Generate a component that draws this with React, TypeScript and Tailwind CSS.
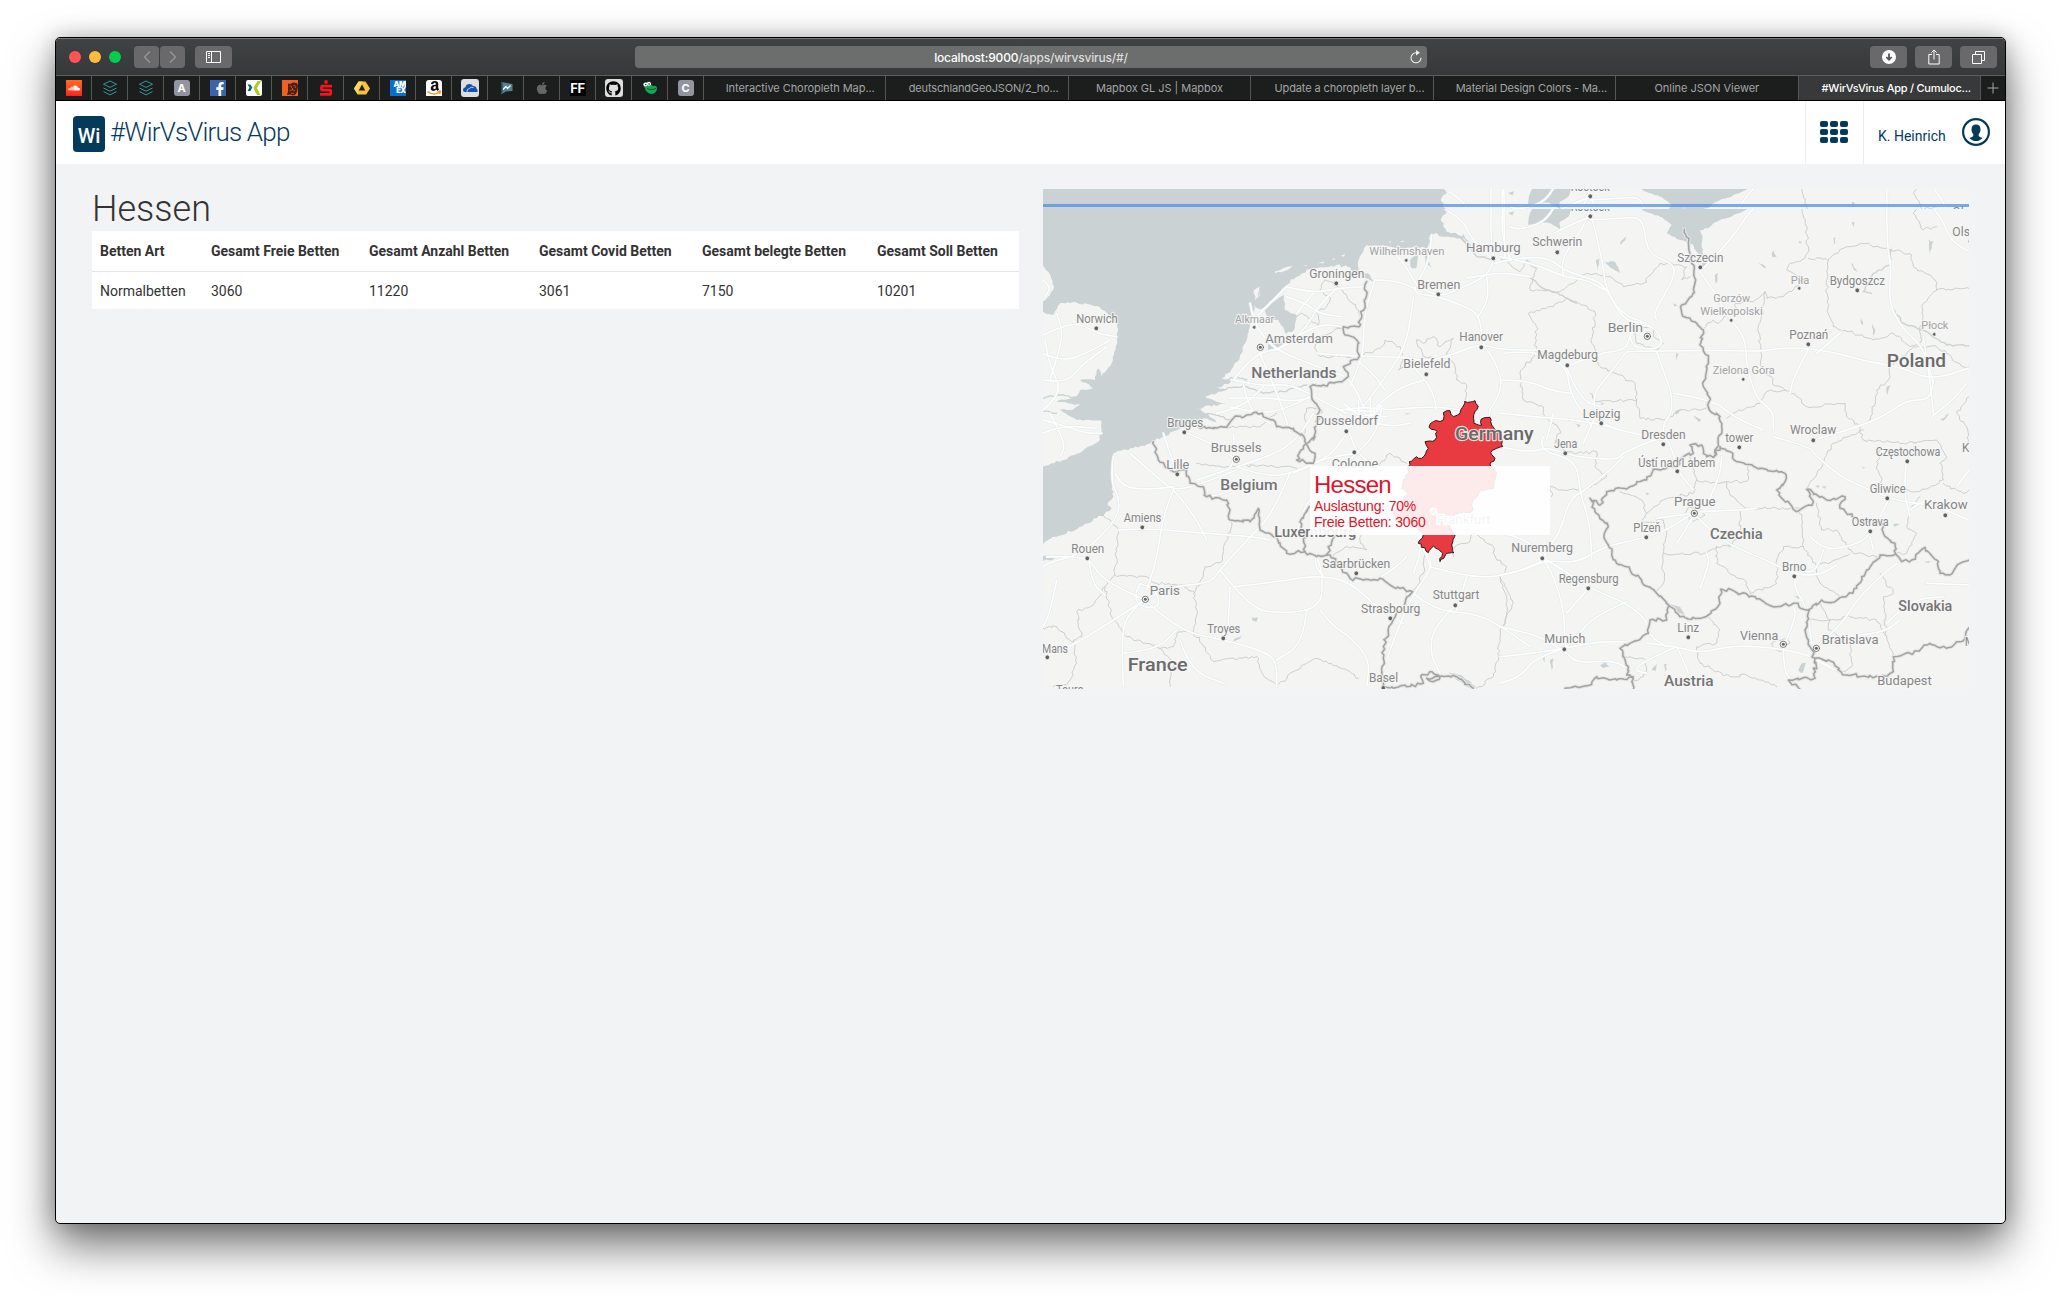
import React from "react";
import { FaSoundcloud, FaAmazon, FaGithub, FaApple, FaFacebookF } from "react-icons/fa";

type Pt = [number, number];

/* Parses "x,y x,y ..." and shifts every point. */
const pts = (s: string, dx = 0, dy = 0): Pt[] =>
  s.trim().split(/\s+/).map((p) => {
    const [x, y] = p.split(",").map(Number);
    return [x + dx, y + dy] as Pt;
  });

/* Subdivides a polyline with a seeded displacement, for coasts and borders. */
function rough(p: Pt[], amp: number, close = false): string {
  let seed = Math.abs(Math.round(p[0][0] * 13 + p[0][1] * 7 + p.length)) + 1;
  const rnd = () => {
    seed = (seed * 16807) % 2147483647;
    return seed / 2147483647 - 0.5;
  };
  const src = close ? [...p, p[0]] : p;
  let d = `M${src[0][0]} ${src[0][1]}`;
  for (let i = 1; i < src.length; i++) {
    const [x0, y0] = src[i - 1];
    const [x1, y1] = src[i];
    const n = Math.max(1, Math.round(Math.hypot(x1 - x0, y1 - y0) / 9));
    for (let k = 1; k < n; k++) {
      const t = k / n;
      d += `L${(x0 + (x1 - x0) * t + rnd() * amp).toFixed(1)} ${(y0 + (y1 - y0) * t + rnd() * amp).toFixed(1)}`;
    }
    d += `L${x1} ${y1}`;
  }
  return close ? d + "Z" : d;
}

/* Smooth line through the points. */
function smooth(p: Pt[]): string {
  let d = `M${p[0][0]} ${p[0][1]}`;
  for (let i = 1; i < p.length - 1; i++) {
    d += `Q${p[i][0]} ${p[i][1]} ${(p[i][0] + p[i + 1][0]) / 2} ${(p[i][1] + p[i + 1][1]) / 2}`;
  }
  const l = p[p.length - 1];
  return d + `L${l[0]} ${l[1]}`;
}

const E = 1410;
const S = 750;

const land: Pt[][] = [
  pts("30,250 55,275 72,320 60,345 30,368"),
  pts("30,388 50,402 70,405 90,370 140,368 200,378 245,410 262,440 262,490 245,550 215,590 205,565 195,600 150,600 190,625 150,630 135,650 80,665 150,675 120,690 90,690 140,720 215,722 215,750 205,785 155,815 100,840 30,860"),
  pts("672,330 690,320 690,345 675,360"),
  pts("735,274 790,257 780,265 735,280"),
  pts("815,256 830,254 828,258"),
  pts("862,248 882,244 880,250"),
  pts("905,238 915,235 913,240"),
  pts("930,226 945,222 942,230"),
  pts("1075,186 1083,184 1083,188"),
  pts("1110,184 1122,182 1118,187"),
];

const water: Pt[][] = [
  pts("30,80 1232,80 1250,100 1232,118 1240,140 1250,155 1275,158 1300,168 1310,195 1290,175 1240,170 1215,160 1200,165 1198,190 1192,240 1204,262 1185,250 1188,205 1150,200 1100,205 1050,198 1010,195 1000,215 986,240 985,275 1020,285 1030,305 1000,285 965,272 960,262 920,255 880,262 840,268 800,290 770,315 740,350 710,378 690,388 672,375 668,400 660,440 650,480 635,520 610,560 575,595 610,605 560,622 585,630 560,640 525,650 560,665 590,670 500,685 525,700 560,725 520,715 480,732 430,754 360,790 300,805 250,820 243,850 245,900 250,950 232,975 245,985 200,1015 150,1040 80,1070 45,1085 30,1110"),
  pts("708,378 762,345 765,390 800,405 792,450 768,462 745,420 715,415 705,395"),
  pts("715,490 740,485 770,490 750,505 715,510"),
  pts("1140,240 1165,225 1158,265 1145,265"),
  pts("770,480 800,465 780,485 775,492"),
  pts("830,430 850,428 820,445"),
  pts("100,80 215,80 205,110 180,125 180,148 145,128 85,135 90,100", E),
  pts("420,80 760,80 640,130 625,145 600,150 608,170 605,200 612,235 590,215 580,195 540,180 500,160 515,135 480,110 430,92", E),
  pts("315,245 345,245 360,280 330,262", E),
  pts("360,190 378,168 376,180 362,194", E),
  pts("288,240 300,236 292,272", E),
  pts("605,250 624,250 615,265", E),
  pts("644,285 655,278 648,312", E),
  pts("775,248 798,262 795,265", E),
  pts("815,222 820,210 830,230 818,232", E),
  pts("895,183 905,185 900,192", E),
  pts("1000,175 1006,172 1004,195", E),
  pts("1055,125 1064,128 1060,142", E),
  pts("1055,248 1072,275 1062,270", E),
  pts("1285,178 1300,185 1290,222", E),
  pts("1168,210 1176,205 1172,255", E),
  pts("1082,408 1090,435 1084,432", E),
  pts("1117,432 1126,450 1120,478", E),
  pts("1160,620 1172,616 1162,645", E),
  pts("1320,720 1348,700 1330,722", E),
  pts("300,664 315,670 305,675", E),
  pts("580,706 605,720 595,726", E),
  pts("525,695 550,682 540,692 528,704", E),
  pts("528,520 536,522 530,540", E),
  pts("520,370 532,376 524,380", E),
  pts("225,730 243,736 235,742", E),
  pts("25,98 42,94 38,106", E),
  pts("505,520 540,530 555,556 530,548", E, S),
  pts("895,722 905,700 918,698 905,730", E, S),
  pts("150,690 162,685 155,720", E, S),
  pts("300,706 318,697 328,710 310,715", E, S),
  pts("128,676 136,676 134,698", E, S),
  pts("455,720 472,700 468,722", E, S),
  pts("493,702 500,702 497,726", E, S),
  pts("945,168 958,166 955,174", E, S),
  pts("965,170 978,168 975,176", E, S),
  pts("1178,284 1200,282 1185,290", E, S),
  pts("1270,395 1292,393 1285,400", E, S),
  pts("675,335 698,340 692,350", E, S),
  pts("885,497 900,502 895,508", E, S),
  pts("1085,108 1098,112 1090,116", E, S),
  pts("436,188 448,190 442,196", E, S),
  pts("665,562 684,562 680,575 668,572", 0, S),
  pts("610,630 635,614 630,626 612,634", 0, S),
  pts("1255,725 1300,740 1340,775 1310,770 1275,745", 0, S),
  pts("30,380 90,375 70,388 40,392", 0, S),
  pts("1122,697 1142,700 1130,704"),
];

const rivers: Pt[][] = [
  pts("1300,165 1340,230 1370,235 1400,250"),
  pts("85,290 130,325 180,345 230,370", E),
  pts("1175,380 1210,430 1270,450 1340,495 1407,497", E),
  pts("1170,255 1120,280 1090,335 1115,340", E),
  pts("560,630 650,620 700,640 760,635 830,615"),
  pts("590,600 620,590 650,600"),
  pts("30,655 90,645 150,655"),
  pts("80,700 30,690"),
  pts("530,700 580,710 600,720"),
  pts("705,296 690,325 685,345"),
];

const countryBorders: Pt[][] = [
  pts("1010,305 1005,370 992,395 988,440 940,440 945,465 980,480 988,530 940,560 955,590 930,605 880,615 840,620 845,650 870,690 862,730 850,780 855,770 820,800 800,840 850,850 855,820 830,795 822,770 790,745 740,740 730,720 680,697 650,705 610,715 590,742 530,745 480,735"),
  pts("370,35 385,90 430,125 470,120 480,160 520,170 530,200 590,210 600,270 660,275 685,235 690,300 730,320 770,370 825,365 860,380 900,375 930,410 960,445 1000,450 1050,445 1080,465 1148,485 1085,580 1060,650 1058,770", 0, S),
  pts("838,230 810,275 825,310 825,365", 0, S),
  pts("925,300 905,335 890,375", 0, S),
  pts("1060,772 1130,770 1180,760 1175,735 1205,725 1230,742 1210,755 1190,745 1280,740 1330,775", 0, S),
  pts("553,148 565,190 575,250 587,300 575,350 545,375 545,398 610,450 600,495 625,540 610,620 630,660 628,690 660,710 665,760 640,832 660,800 690,815 710,845 780,865 855,880 855,905 830,930 890,995 940,965 920,928 980,960 1035,950 1020,985 1075,1020 1140,1025 1155,1070 1185,1090 1187,1122", E),
  pts("640,82 610,70 605,45 570,45 580,70 550,80 530,110 460,118 440,150 390,170 320,185 300,225 270,205 285,245 325,290 312,320 350,400 380,410 470,490 540,560 575,568 625,555 660,520 662,478 700,482 830,530 880,520 925,540 965,510 1005,515 1070,475 1100,420 1140,375 1187,372 1205,395 1235,390 1275,352 1310,390 1320,430 1350,435 1380,400 1410,390", E, S),
  pts("505,530 500,570 450,570 445,610 360,655 385,710 380,735 400,745 400,780", E, S),
  pts("195,775 270,765 290,740 350,750 400,740", E, S),
  pts("928,540 915,600 930,650 945,685 985,690 1040,735 1160,740 1180,725 1180,680 1240,670 1290,640 1340,655 1395,625 1410,590", E, S),
  pts("945,685 945,745 865,750 900,778", E, S),
];

const stateBorders: Pt[][] = [
  pts("885,300 870,330 900,350 890,380 860,400 865,435 935,445"),
  pts("885,300 930,325 985,390 990,420"),
  pts("865,435 815,400 800,410"),
  pts("935,445 870,470 855,500 870,530 980,530 1050,505 1065,480 1110,500 1120,530 1105,570 1140,555"),
  pts("1160,480 1180,490 1210,470 1230,500 1270,475 1250,520 1275,560 1280,600 1310,615 1305,660"),
  pts("1160,480 1180,530 1240,535 1250,520"),
  pts("820,780 830,685 870,685 875,700"),
  pts("590,745 640,740 690,740 740,700"),
  pts("500,100 600,110 700,105 760,110 800,115", 0, S),
  pts("1050,240 1000,260 990,330 1010,360 950,350 905,380", 0, S),
  pts("1045,110 1080,70 1110,85 1130,100", 0, S),
  pts("215,250 265,300 255,430 225,470 245,560 290,620 350,640 390,655 430,650 440,610 490,605 500,540 490,490 520,440 525,410 575,395 580,350 605,290 600,270", 0, S),
  pts("255,435 350,440 380,460 460,465 495,490", 0, S),
  pts("225,470 190,525 140,545 155,620 130,630 140,700 110,765 70,770", 0, S),
  pts("39,595 80,590 110,625 140,640", 0, S),
  pts("490,605 515,640 550,695 680,680 700,735 740,765 830,700 860,685 950,720 985,745", 0, S),
  pts("390,655 430,700 420,770", 0, S),
  pts("1148,485 1185,420 1180,340", 0, S),
  pts("1270,380 1275,350 1310,340 1330,310 1390,350 1400,390 1430,410 1410,440 1430,500 1430,560 1410,600 1405,690 1390,740 1340,775", 0, S),
  pts("1410,440 1450,520 1420,590", 0, S),
  pts("0,230 60,275 80,240 110,265 90,330 180,335 260,280 330,290 370,320 430,310 480,250 560,260 545,300 570,290", E),
  pts("85,400 160,380 200,355 250,375 285,395 275,490 300,560 405,610 410,660 290,665 270,640", E),
  pts("85,400 110,440 105,520 60,580 70,660 130,680 135,710 180,750 165,790", E),
  pts("405,460 420,440 460,445 460,470 490,490 470,510 430,495 410,490 405,460", E),
  pts("410,660 420,715 490,720 540,690 625,685", E),
  pts("612,445 640,420 655,430 710,385 705,370 760,365 795,335 800,355 850,350 885,320 915,300 860,270 870,250 915,235 925,200 915,130 900,27", E),
  pts("925,235 985,240 1030,205 1085,190 1160,205 1235,225 1240,260 1305,300 1310,330 1407,325", E),
  pts("985,240 980,300 985,400 1000,440 1120,480 1180,460 1230,500 1260,490 1270,370 1310,330", E),
  pts("795,335 790,400 775,440 785,580 815,590 820,615 855,630 800,635 780,670 700,700 680,715", E),
  pts("855,630 890,650 920,680 1035,670 1040,710 1080,740 1110,720 1130,630 1165,600 1170,560 1240,500 1310,500 1390,560 1407,560", E),
  pts("1407,650 1370,700 1400,740 1407,790", E),
  pts("1090,750 1000,790 970,850 920,930", E),
  pts("1080,740 1090,780 1210,790 1310,780 1340,830 1320,850 1330,900 1260,935 1150,925 1130,860 1140,800", E),
  pts("1245,30 1270,60 1240,100 1270,150 1310,140", E),
  pts("1260,200 1230,240 1220,290 1250,310 1220,370 1190,370", E, S),
  pts("1330,160 1390,190 1407,180", E, S),
  pts("240,180 180,180 150,170 155,200", E, S),
  pts("165,30 190,60 230,70 290,65 285,110 320,140 250,180", E, S),
  pts("570,80 590,150 650,160 680,155 740,155 745,105", E, S),
  pts("680,155 690,195 740,235 830,235 900,235", E, S),
  pts("590,150 580,190 500,205 440,250 425,210 360,185", E, S),
  pts("440,250 425,280 490,270 500,310 490,370 620,370 650,350 690,350 720,300 720,240", E, S),
  pts("490,370 490,460 465,490", E, S),
  pts("650,350 650,400 740,460 750,490 830,460 830,390 850,350 910,350 900,240", E, S),
  pts("910,350 950,410 960,460 1020,500", E, S),
  pts("950,220 965,300 1010,300 1060,370 1130,380 1120,400", E, S),
  pts("950,410 1050,370", E, S),
  pts("960,520 990,570 1050,560 1130,570 1160,620 1150,500 1180,490 1140,430", E, S),
  pts("1160,620 1180,680", E, S),
  pts("990,570 985,600 1050,640 1055,710 1030,725", E, S),
  pts("930,570 990,570", E, S),
  pts("625,560 660,600 650,640 590,650 600,700 690,740 740,735 780,750 830,770", E, S),
  pts("375,680 430,685 440,730 400,760", E, S),
  pts("815,640 830,630 860,625 870,640 840,665 820,655 815,640", E, S),
  pts("555,250 570,230 600,235 615,255 600,265 580,275 555,250", E, S),
];

const roads: Pt[][] = [
  pts("39,465 90,440 150,430 200,460 260,470"),
  pts("80,400 100,450 85,520 60,600"),
  pts("39,520 100,545 170,520 240,480"),
  pts("39,600 110,610 150,560 230,500"),
  pts("39,690 100,640 60,560 45,480"),
  pts("39,720 110,740 170,760 215,760"),
  pts("60,700 110,790 90,830"),
  pts("39,760 90,735 200,745"),
  pts("39,300 65,320 45,350"),
  pts("1385,30 1380,180 1395,235 1370,290 1280,330 1230,350 1160,320 1130,260 1090,215"),
  pts("1255,95 1300,120 1320,170 1385,235"),
  pts("1420,60 1410,150 1440,235"),
  pts("1395,250 1480,230 1560,235 1600,270 1660,290 1720,310 1770,400 1850,430"),
  pts("1310,295 1400,275 1500,290"),
  pts("1205,165 1200,240 1160,310 1150,340 1225,350 1280,370 1350,400 1355,490 1395,540 1420,620 1380,690"),
  pts("1370,290 1380,350 1345,410"),
  pts("1035,300 1090,300 1155,325"),
  pts("1035,300 1010,370 1000,450 1000,520 960,620"),
  pts("1150,350 1140,440 1115,520 1060,600 1000,680"),
  pts("860,520 980,530 1120,530 1200,545 1290,515 1355,490 1410,510 1560,510"),
  pts("1120,530 1180,590 1210,640 1220,690"),
  pts("1030,690 1090,630 1180,600"),
  pts("980,540 1030,580 1065,630"),
  pts("660,370 670,420 700,470 740,510 860,560 960,590 1000,680"),
  pts("770,320 730,360 680,410"),
  pts("770,320 850,340 920,325 1000,320"),
  pts("800,400 850,340"), pts("920,325 870,370 830,440 770,500 690,520"),
  pts("740,510 850,430 940,440"), pts("770,350 830,370 865,400 935,410"),
  pts("610,600 700,620 780,610 870,660 950,700"),
  pts("610,600 650,550 690,520"), pts("600,680 680,700 760,690 860,640"),
  pts("690,520 720,590 760,690 780,760"), pts("560,700 640,680 700,620"),
  pts("600,655 690,650 790,665 850,650"), pts("640,610 655,690 720,730"),
  pts("610,760 620,860 560,880 500,900"),
  pts("620,860 700,890 790,880 900,830 950,760"),
  pts("620,860 720,830 800,780 850,700"),
  pts("463,757 550,790 620,840"), pts("440,880 400,760"),
  pts("930,690 1000,680 1060,690 1130,685 1220,680 1290,690"),
  pts("930,700 960,760 980,820 1060,880 1130,950 1170,1050"),
  pts("960,740 1030,710 1060,660 1040,760 980,820"),
  pts("920,730 1000,700 1070,710"), pts("940,670 1000,720 1080,740 1140,730"),
  pts("985,660 990,735"), pts("1020,655 1025,740"), pts("950,690 1055,695"),
  pts("1380,690 1370,760"), pts("980,820 920,880 830,960 800,1060"),
  pts("980,820 890,830 790,880"),
  pts("250,830 240,900 270,960 260,1020 160,1120 50,1150 30,1170"),
  pts("300,820 390,900 430,930 490,920 620,870"),
  pts("430,930 400,1000 380,1140 350,1230"),
  pts("430,930 490,1000 530,1080"), pts("265,1050 350,1045 520,1060 670,1070 720,1080"),
  pts("430,920 350,930 280,920 255,880"), pts("530,950 600,940 640,900"),
  pts("345,1260 280,1230 210,1190 175,1130 50,1130"), pts("345,1260 410,1220 540,1210 570,1170 660,1070 720,1010 780,880"),
  pts("345,1260 440,1350 580,1380 690,1410 740,1440 740,1520"),
  pts("345,1260 290,1300 275,1380 280,1520"), pts("345,1260 250,1320 140,1390 50,1430"),
  pts("570,1170 610,1220 670,1280 720,1300 870,1290 880,1190 860,1130"),
  pts("600,1220 595,1360 580,1380"), pts("610,1220 750,1205 860,1185 960,1205 1050,1290 1120,1330"),
  pts("870,1290 910,1340 960,1370 1020,1440 1010,1520"), pts("830,1290 820,1390 740,1440"),
  pts("175,1130 185,1210 225,1245"), pts("80,1200 60,1300 39,1340"),
  pts("280,1420 380,1410 440,1350"), pts("450,1380 480,1470 580,1510"),
  pts("330,1210 300,1270 390,1290 380,1230 330,1210"),
  pts("1150,1080 1190,1120 1210,1160 1150,1240 1090,1380 1050,1500"),
  pts("1170,1050 1175,1110 1150,1180"), pts("1200,1160 1310,1190 1410,1190 1500,1160 1540,1140"),
  pts("1130,1130 1060,1200 960,1205"), pts("1150,1240 1210,1290 1330,1300 1400,1330 1500,1400"),
  pts("1276,1276 1210,1340 1200,1420 1230,1480"), pts("1310,1190 1280,1290"),
  pts("1190,1010 1230,1000 1300,960"), pts("1200,1160 1180,1090 1130,1020"),
  pts("860,1120 850,1150 880,1190"), pts("1060,880 1000,920 920,930"),
  pts("10,520 100,510 200,555 210,640 250,700 275,740", E),
  pts("0,600 80,600 150,630 210,640", E),
  pts("275,30 275,110 185,230 190,290", E), pts("275,110 310,250 315,320 370,420 430,430", E),
  pts("270,120 360,115 430,110 440,220 520,250 525,290 460,400 470,420", E),
  pts("200,70 270,50 360,55 430,50 470,70", E), pts("160,160 230,125 275,110", E),
  pts("0,230 100,250 190,290 260,300 315,330", E),
  pts("200,560 290,520 380,510 390,460 430,430 470,450 490,490 460,510 400,500 390,470", E),
  pts("380,515 640,510 780,515 870,500 1000,515 1100,545 1200,560 1290,600 1407,565", E),
  pts("380,515 330,580 280,640 285,700 320,740 400,760 500,780", E),
  pts("470,515 500,600 515,640 515,700 490,730 490,780", E),
  pts("520,640 640,660 700,710 790,750", E), pts("600,275 640,330 690,420 735,470 740,560 770,660 820,690 820,750", E),
  pts("600,275 660,215 720,140 760,80 830,50", E), pts("1160,30 1160,200 1175,260 1165,370 1210,450 1270,500 1300,610", E),
  pts("930,500 880,590 870,640", E), pts("950,520 1025,455", E), pts("1270,470 1290,600 1300,700", E),
  pts("940,780 1080,740 1165,700 1220,660 1290,660 1300,600", E),
  pts("1295,710 1350,670 1400,610", E), pts("1250,30 1320,100 1350,180 1407,215", E),
  pts("200,565 240,660 300,680", E), pts("0,700 100,710 230,720 330,740", E), pts("140,780 160,700", E),
  pts("250,790 290,700", E), pts("170,60 150,120 60,150 30,140", E), pts("10,30 15,230", E),
  pts("0,50 90,70 140,50 220,80 350,90 370,70", E, S), pts("370,70 430,40 500,20 520,70 530,120 580,180", E, S),
  pts("240,190 320,130 370,80", E, S), pts("130,20 110,60 230,90 240,190 270,280 275,390", E, S),
  pts("240,190 210,200 180,310 130,370 140,390", E, S),
  pts("0,435 60,425 140,390 230,400 310,350 430,325 500,300 580,250", E, S),
  pts("0,310 70,320 140,390 190,520 195,640 200,660", E, S),
  pts("140,390 190,420 280,480 380,520 440,570 450,620 500,650", E, S),
  pts("380,515 280,560 230,620 195,655", E, S), pts("0,680 100,670 195,655 290,635 380,635", E, S),
  pts("0,590 100,610 190,660 230,700 340,690 390,720", E, S),
  pts("195,655 110,680 60,740 0,760", E, S), pts("265,475 200,550", E, S),
  pts("440,640 530,650 600,670 700,645 840,655 940,680 990,710", E, S),
  pts("530,650 555,700 580,775", E, S), pts("530,650 440,690 400,720 440,730", E, S),
  pts("580,250 640,310 700,350 800,390 885,435 960,435 1010,405", E, S),
  pts("600,245 720,240 770,235", E, S), pts("580,250 470,265", E, S), pts("530,340 580,260", E, S),
  pts("885,435 880,470 920,530 935,640", E, S), pts("600,475 630,400 620,370", E, S),
  pts("620,225 660,140 665,80", E, S), pts("930,320 970,360 1050,350 1110,320 1160,220 1170,200", E, S),
  pts("970,360 950,430 900,420", E, S), pts("820,20 930,50 940,70 1020,140 1110,180 1200,215 1300,225 1407,270", E, S),
  pts("1220,80 1210,180 1230,260", E, S), pts("1230,240 1280,200 1330,230", E, S),
  pts("950,650 1020,590 1070,510 1140,440 1190,400", E, S), pts("1160,580 1230,510 1330,500", E, S),
  pts("850,650 850,720 880,760", E, S), pts("850,650 890,560 880,530", E, S),
  pts("950,690 1030,740 1170,750 1300,740", E, S), pts("1280,460 1407,465", E, S),
  pts("1110,320 1120,360", E, S), pts("1370,170 1407,120", E, S), pts("1040,620 1150,610 1200,570", E, S),
];

type Kind = "town" | "city" | "country" | "big";
type Label = [string, number, number, number, Kind, number?, number?, boolean?];

/* text, x, baseline, width, kind, marker x, marker y, capital */
const labels: Label[] = [
  ["Wilhelmshaven", 1018, 225, 225, "town", 1129, 241],
  ["Groningen", 838, 293, 165, "city", 919, 310],
  ["Hamburg", 1308, 216, 164, "city", 1390, 235],
  ["Bremen", 1162, 326, 129, "city", 1225, 343],
  ["Norwich", 139, 429, 124, "city", 199, 445],
  ["Alkmaar", 615, 430, 117, "town", 673, 442],
  ["Amsterdam", 706, 488, 203, "city", 691, 502, true],
  ["Netherlands", 664, 594, 256, "country"],
  ["Hanover", 1288, 484, 131, "city", 1354, 502],
  ["Bielefeld", 1120, 565, 141, "city", 1189, 583],
  ["Bruges", 412, 742, 108, "city", 463, 757],
  ["Dusseldorf", 857, 735, 187, "city", 949, 754],
  ["Germany", 1275, 780, 236, "big"],
  ["Schwerin", 97 + E, 199, 150, "city", 172 + E, 217],
  ["Rostock", 212 + E, 94, 117, "city", 271 + E, 109],
  ["Szczecin", 532 + E, 245, 138, "city", 601 + E, 262],
  ["Piła", 872 + E, 311, 56, "town", 898 + E, 325],
  ["Bydgoszcz", 989 + E, 314, 166, "city", 1072 + E, 331],
  ["Olsztyn", 1357 + E, 167, 120, "city", 1412 + E, 184],
  ["Gorzów", 640 + E, 367, 110, "town"],
  ["Wielkopolski", 601 + E, 405, 187, "town", 694 + E, 421],
  ["Berlin", 323 + E, 457, 106, "city", 442 + E, 469, true],
  ["Magdeburg", 112 + E, 538, 182, "city", 202 + E, 556],
  ["Poznań", 868 + E, 477, 117, "city", 925 + E, 493],
  ["Płock", 1264 + E, 447, 81, "town", 1303 + E, 463],
  ["Poland", 1160 + E, 562, 178, "big"],
  ["Zielona Góra", 638 + E, 582, 186, "town", 730 + E, 598],
  ["Leipzig", 248 + E, 713, 113, "city", 304 + E, 730],
  ["Dresden", 424 + E, 777, 133, "city", 490 + E, 793],
  ["Wroclaw", 870 + E, 763, 139, "city", 940 + E, 781],
  ["Brussels", 542, 66 + S, 153, "city", 619, 88 + S, true],
  ["Lille", 409, 117 + S, 69, "city", 442, 133 + S],
  ["Cologne", 905, 113 + S, 140, "city", 973, 67 + S],
  ["Belgium", 571, 179 + S, 172, "country"],
  ["Amiens", 281, 276 + S, 113, "city", 337, 292 + S],
  ["Rouen", 124, 370 + S, 99, "city", 172, 385 + S],
  ["Luxembourg", 733, 321 + S, 246, "country"],
  ["Saarbrücken", 877, 414 + S, 204, "city", 979, 430 + S],
  ["Paris", 359, 496 + S, 91, "city", 346, 508 + S, true],
  ["Stuttgart", 1208, 508 + S, 140, "city", 1276, 526 + S],
  ["Strasbourg", 993, 549 + S, 178, "city", 1081, 565 + S],
  ["Troyes", 532, 609 + S, 99, "city", 580, 625 + S],
  ["Mans", 36, 668 + S, 78, "city", 52, 682 + S],
  ["France", 293, 724 + S, 180, "big"],
  ["Basel", 1017, 757 + S, 87, "city", 1060, 774 + S],
  ["Tours", 78, 793 + S, 82, "city"],
  ["Jena", 162 + E, 54 + S, 70, "city", 196 + E, 70 + S],
  ["tower", 676 + E, 36 + S, 84, "city", 718 + E, 52 + S],
  ["Ústí nad Labem", 415 + E, 110 + S, 231, "city", 532 + E, 124 + S],
  ["Częstochowa", 1127 + E, 79 + S, 194, "city", 1222 + E, 94 + S],
  ["Kielce", 1386 + E, 65 + S, 95, "city"],
  ["Prague", 522 + E, 229 + S, 125, "city", 583 + E, 250 + S, true],
  ["Gliwice", 1109 + E, 190 + S, 108, "city", 1162 + E, 205 + S],
  ["Krakow", 1272 + E, 236 + S, 131, "city", 1336 + E, 256 + S],
  ["Plzeň", 400 + E, 306 + S, 82, "city", 439 + E, 322 + S],
  ["Czechia", 630 + E, 327 + S, 158, "country"],
  ["Ostrava", 1055 + E, 288 + S, 111, "city", 1111 + E, 304 + S],
  ["Nuremberg", 34 + E, 367 + S, 185, "city", 127 + E, 385 + S],
  ["Brno", 846 + E, 423 + S, 73, "city", 883 + E, 439 + S],
  ["Regensburg", 176 + E, 459 + S, 180, "city", 265 + E, 475 + S],
  ["Slovakia", 1195 + E, 544 + S, 162, "country"],
  ["Linz", 532 + E, 606 + S, 66, "city", 565 + E, 622 + S],
  ["Munich", 133 + E, 639 + S, 123, "city", 193 + E, 658 + S],
  ["Vienna", 720 + E, 630 + S, 115, "city", 850 + E, 643 + S, true],
  ["Bratislava", 965 + E, 642 + S, 171, "city", 949 + E, 655 + S, true],
  ["Austria", 492 + E, 768 + S, 149, "country"],
  ["Budapest", 1132 + E, 766 + S, 163, "city"],
  ["Miskolc", 1394 + E, 647 + S, 120, "city"],
];

const hessen = pts(
  "495,65 525,62 535,78 525,95 522,130 545,135 543,118 570,112 575,135 600,160 608,200 590,205 572,218 585,235 570,255 590,280 580,325 545,330 520,360 515,395 465,400 445,430 455,450 465,465 455,495 462,518 440,520 420,545 428,520 400,498 385,518 355,490 370,465 340,430 285,420 280,400 325,340 305,325 325,270 328,245 350,230 365,235 385,205 375,185 405,180 412,155 387,142 400,125 430,120 430,98 450,92 460,110 480,100",
  810,
  600
);

const fontSize: Record<Kind, number> = { town: 35, city: 38, country: 45, big: 56 };
const fontFill: Record<Kind, string> = { town: "#a3a3a3", city: "#868686", country: "#747474", big: "#6a6a6a" };

function MapDrawing() {
  return (
    <svg className="block h-full w-full" viewBox="39 27 2778 1500" fontFamily="Roboto, 'Open Sans', sans-serif">
      <defs>
        <clipPath id="strip"><rect x="39" y="87" width="2778" height="60" /></clipPath>
        <clipPath id="main"><rect x="39" y="87" width="2778" height="1440" /></clipPath>
      </defs>
      <rect x="39" y="27" width="2778" height="1500" fill="#f4f4f3" />
      <g id="tiles" clipPath="url(#main)" strokeLinejoin="round" strokeLinecap="round">
        {water.map((p, i) => <path key={i} d={rough(p, i ? 5 : 8, true)} fill="#cad2d3" />)}
        {land.map((p, i) => <path key={i} d={rough(p, 6, true)} fill="#f4f4f3" />)}
        {rivers.map((p, i) => <path key={i} d={rough(p, 6)} fill="none" stroke="#cad2d3" strokeWidth="4" />)}
        {stateBorders.map((p, i) => <path key={i} d={rough(p, 9)} fill="none" stroke="#cbcbcb" strokeWidth="2.8" />)}
        {roads.map((p, i) => <path key={i} d={smooth(p)} fill="none" stroke="#e6ecec" strokeWidth="8.5" />)}
        {roads.map((p, i) => <path key={i} d={smooth(p)} fill="none" stroke="#ffffff" strokeWidth="4.5" />)}
        {countryBorders.map((p, i) => <path key={i} d={rough(p, 11)} fill="none" stroke="#e6e6e6" strokeWidth="11" />)}
        {countryBorders.map((p, i) => <path key={i} d={rough(p, 11)} fill="none" stroke="#a3a3a3" strokeWidth="4.6" />)}
        <path d={rough(hessen, 7, true)} fill="#e73b41" stroke="#3a1517" strokeWidth="3" />
        <circle cx="1210" cy="994" r="9" fill="#999" stroke="#ffffff" strokeWidth="5" />
        <text x="1220" y="1032" fontSize="37" fill="#909090" stroke="#ffffff" strokeWidth="8" paintOrder="stroke" textLength="162" lengthAdjust="spacingAndGlyphs">Frankfurt</text>
        {labels.map(([t, x, y, w, kind, mx, my, capital]) => (
          <g key={t}>
            <text
              x={x} y={y} textLength={w} lengthAdjust="spacingAndGlyphs"
              fontSize={fontSize[kind]} fontWeight={kind === "country" || kind === "big" ? 500 : 400}
              fill={fontFill[kind]} stroke="#f7f7f7" strokeOpacity="0.85" strokeWidth="7" paintOrder="stroke"
            >
              {t}
            </text>
            {mx !== undefined && my !== undefined && (capital ? (
              <g>
                <circle cx={mx} cy={my} r="9.5" fill="#f7f7f7" stroke="#666" strokeWidth="2.5" />
                <circle cx={mx} cy={my} r="4.5" fill="#666" />
              </g>
            ) : (
              <circle cx={mx} cy={my} r={kind === "town" ? 5.5 : 7} fill="#606060" stroke="#f7f7f7" strokeWidth="2" />
            ))}
          </g>
        ))}
      </g>
      <g transform="translate(0 -60)">
        <use href="#tiles" clipPath="url(#strip)" />
      </g>
      <rect x="39" y="72" width="2778" height="9" fill="#4a90e9" fillOpacity="0.74" />
    </svg>
  );
}

const Layers = () => (
  <svg className="h-4 w-4" viewBox="0 0 16 16" fill="none" stroke="#3a96a3" strokeWidth="1">
    <path d="M8 1 14.5 4.2 8 7.400 1.500 4.200ZM1.500 8 8 11.200 14.500 8M1.500 11.600 8 14.900 14.500 11.600" />
  </svg>
);

const Letter = ({ c }: { c: string }) => (
  <span className="flex h-4 w-4 items-center justify-center rounded-[3px] bg-[#9294a0] text-[11px] font-bold leading-none text-white">{c}</span>
);

const pinned: React.ReactNode[] = [
  <span className="flex h-4 w-4 items-center justify-center bg-linear-to-b from-[#ff6a22] to-[#fb1f1f]"><FaSoundcloud className="h-3 w-3 text-white" /></span>,
  <Layers />,
  <Layers />,
  <Letter c="A" />,
  <span className="flex h-4 w-4 items-end justify-end bg-[#3c64ad]"><FaFacebookF className="h-[14px] w-3 text-white" /></span>,
  <svg className="h-4 w-4" viewBox="0 0 16 16">
    <rect width="16" height="16" rx="2" fill="#fff" />
    <path d="M11.500 1H15L11 8 14.500 15H11L7.300 8Z" fill="#b0c829" />
    <path d="M1.500 4.500h2.900L6.300 7.400 4.400 11H1.500L3.500 7.400Z" fill="#0a6464" />
  </svg>,
  <svg className="h-4 w-4" viewBox="0 0 16 16">
    <rect width="16" height="16" fill="#ee6023" />
    <path d="M6 3.500 8 4l3-1.500 4 .5 1 3-1 6-2 3-2.500.5-2-1L5 15l1-3.500Z" fill="#4a1f12" />
    <path d="M7.500 6.500c1.500-1.500 2.500 0 2 1.500M11.500 5.500c1.500-.5 2.500.5 1.500 2.500M7.500 11c1.500-1.500 4-1.500 5.500 0M9 13.300h3M10.500 8v2" fill="none" stroke="#ee6023" strokeWidth=".8" />
  </svg>,
  <svg className="h-4 w-4" viewBox="0 0 16 16" fill="none" stroke="#f5151f">
    <circle cx="8" cy="1.900" r="1.900" fill="#f5151f" stroke="none" />
    <path d="M14 6.200H4.200Q3.500 6.200 3.500 6.900V9.500Q3.500 10.200 4.200 10.200H12Q12.700 10.200 12.700 10.900V13.500Q12.700 14.300 12 14.300H2" strokeWidth="2.800" />
  </svg>,
  <svg className="h-4 w-4" viewBox="0 0 16 16">
    <path d="M4.500 1.500h7L16 8.500 12.200 14.500H3.800L0 8.500Z" fill="#fbc13c" />
    <path d="M4.500 1.500h4L4 9.500 3.800 14.500 0 8.500Z" fill="#ffd965" />
    <path d="M8 4.500 11.200 10.500H4.800Z" fill="#1d1d1d" />
  </svg>,
  <span className="flex h-4 w-4 flex-col items-end justify-center overflow-hidden bg-[#0a6fce] text-[7.5px] font-black leading-[6.5px] tracking-[-0.6px] text-white"><span>AM</span><span>EX</span></span>,
  <span className="flex h-4 w-4 items-center justify-center rounded-[3px] bg-white">
    <svg className="h-4 w-4" viewBox="0 0 16 16">
      <svg x="1" y="0" width="14" height="15.5" viewBox="0 0 448 512"><FaAmazon x="0" y="0" size={500} color="#111" /></svg>
      <path d="M0 11.300H16V16H0Z" fill="#fff" />
      <path d="M1.300 11.700Q7.500 15.800 12.800 12.700M11.500 11.700 14.300 11.500 13.700 14.200" fill="none" stroke="#f79a1e" strokeWidth="1.400" />
    </svg>
  </span>,
  <span className="flex h-[18px] w-[18px] items-center justify-center rounded-[3px] bg-[#dedfe1]">
    <svg className="h-4 w-4" viewBox="0 0 16 16"><path d="M1 10Q1 7.500 3.500 7.300 4 4 7.500 4 10 4 11 6 14.500 6.200 14.500 8.500 16 9.300 15.500 12H3Q1 12 1 10Z" fill="#1253ad" /><path d="M5 12Q4.500 9 7.300 8.500 9 6.500 11.500 7.500" fill="none" stroke="#dedfe1" strokeWidth=".9" /></svg>
  </span>,
  <svg className="h-4 w-4" viewBox="0 0 16 16"><path d="M3 2 14.500 4V11L8 11.500 3 14.500Z" fill="#54808f" /><path d="M5 9.500 8 6.500 9.500 8.500 12.500 5.500" fill="none" stroke="#fff" strokeWidth="1.200" /><path d="M3 2V14.500L4.500 12V3Z" fill="#2a4550" /></svg>,
  <FaApple className="h-[14px] w-[14px] text-[#666]" />,
  <span className="flex h-4 w-4 items-center justify-center bg-black text-[13px] font-bold leading-none tracking-[-0.5px] text-white">FF</span>,
  <span className="flex h-[18px] w-[18px] items-center justify-center rounded-[3px] bg-[#dedede]"><FaGithub className="h-[15px] w-[15px] text-black" /></span>,
  <svg className="h-4 w-4" viewBox="0 0 16 16"><path d="M1 5Q1 2 4 2.500 6 1 8 3 9 5 11 6 15 5 15 9 14 14 9 14 3 12 3 8Z" fill="#18a551" /><path d="M5 8Q8 11 14 8.500" fill="none" stroke="#0a5a2c" /><circle cx="3.500" cy="4.500" r="2" fill="#fff" /><circle cx="7" cy="3.800" r="2" fill="#fff" /><circle cx="3.800" cy="4.600" r=".7" /><circle cx="7.100" cy="4" r=".7" /></svg>,
  <Letter c="C" />,
];

const tabs = [
  { title: "Interactive Choropleth Map...", inner: "pl-[11px] tracking-[-0.06px]" },
  { title: "deutschlandGeoJSON/2_ho...", inner: "pl-[13px] tracking-[-0.15px]" },
  { title: "Mapbox GL JS | Mapbox", inner: "tracking-[-0.03px]" },
  { title: "Update a choropleth layer b...", inner: "pl-[15px] tracking-[-0.12px]" },
  { title: "Material Design Colors - Ma...", inner: "pl-[14px] tracking-[-0.12px]" },
  { title: "Online JSON Viewer", inner: "tracking-[-0.03px]" },
];

const columns = [
  { head: "Betten Art", value: "Normalbetten", w: "w-[111px]" },
  { head: "Gesamt Freie Betten", value: "3060", w: "w-[158px]" },
  { head: "Gesamt Anzahl Betten", value: "11220", w: "w-[170px]" },
  { head: "Gesamt Covid Betten", value: "3061", w: "w-[163px]" },
  { head: "Gesamt belegte Betten", value: "7150", w: "w-[175px]" },
  { head: "Gesamt Soll Betten", value: "10201", w: "w-[150px]" },
];

const toolButton = "flex h-[22px] items-center justify-center rounded bg-[#69696b]";

function Toolbar() {
  return (
    <div className="flex h-[38px] items-center border-b border-[#5c5d5d] border-t border-t-[#777878] bg-linear-to-b from-[#414243] to-[#373839] pl-[13px] pr-2">
      <div className="flex gap-2">
        <span className="h-3 w-3 rounded-full bg-[#ff5452]" />
        <span className="h-3 w-3 rounded-full bg-[#fdbc40]" />
        <span className="h-3 w-3 rounded-full bg-[#04cd4d]" />
      </div>
      <div className="ml-[13px] flex gap-px">
        <span className={`${toolButton} w-[25px]`}>
          <svg className="h-3 w-2" viewBox="0 0 8 12" fill="none" stroke="#97979a" strokeWidth="1.300"><path d="M7 .5 1.500 6 7 11.500" /></svg>
        </span>
        <span className={`${toolButton} w-[25px]`}>
          <svg className="h-3 w-2" viewBox="0 0 8 12" fill="none" stroke="#97979a" strokeWidth="1.300"><path d="M1 .5 6.500 6 1 11.500" /></svg>
        </span>
      </div>
      <span className={`${toolButton} ml-[10px] w-[37px]`}>
        <svg className="h-3 w-[15px]" viewBox="0 0 15 12" fill="none" stroke="#fff"><path d="M.5.5h14v11H.5ZM5.500.5v11M2 2.500h2M2 4.500h2M2 6.500h2" /></svg>
      </span>
      <div className="ml-[403px] flex h-[22px] w-[792px] items-center rounded bg-[#6c6d6d] pr-[5px] text-xs font-medium text-white">
        <span className="flex-1 pl-[17px] pt-px text-center tracking-[-0.18px]">localhost:9000<span className="text-[#dedede]">/apps/wirvsvirus/#/</span></span>
        <svg className="h-[14px] w-3" viewBox="0 0 12 14" fill="none" stroke="#eee" strokeWidth="1.100"><path d="M7 2.800H6A5 5 0 1 0 11 7.800" /><path d="M6 0 10 2.800 6 5.500Z" fill="#eee" stroke="none" /></svg>
      </div>
      <div className="ml-auto flex gap-2">
        <span className={`${toolButton} w-[37px]`}>
          <svg className="h-[14px] w-[14px]" viewBox="0 0 14 14"><circle cx="7" cy="7" r="7" fill="#fff" /><path d="M7 3.500v6M4.300 7 7 9.800 9.700 7" fill="none" stroke="#555" strokeWidth="1.800" /></svg>
        </span>
        <span className={`${toolButton} w-[37px]`}>
          <svg className="h-4 w-3" viewBox="0 0 12 16" fill="none" stroke="#fff"><path d="M4 5.500H.8v9.500h10.400V5.500H8M6 10.500V1M3.300 3.700 6 1l2.700 2.700" /></svg>
        </span>
        <span className={`${toolButton} w-[37px]`}>
          <svg className="h-[13px] w-[13px]" viewBox="0 0 13 13" fill="none" stroke="#fff"><path d="M.5 3.500h9v9h-9ZM3.500 3.500v-3h9v9h-3" /></svg>
        </span>
      </div>
    </div>
  );
}

function TabBar() {
  return (
    <div className="flex h-[25px] border-b border-black bg-[#1c1d1d]">
      {pinned.map((icon, i) => (
        <div key={i} className="flex w-9 shrink-0 items-center justify-center border-r border-[#565757]">{icon}</div>
      ))}
      {tabs.map(({ title, inner }) => (
        <div key={title} className="flex min-w-0 flex-1 items-center justify-center border-r border-[#565757] pt-px text-[11px] text-[#a4a5a5]">
          <span className={`${inner} whitespace-nowrap`}>{title}</span>
        </div>
      ))}
      <div className="flex min-w-0 flex-1 items-center justify-center border-r border-[#565757] bg-[#38393b] pt-px text-[11px] font-medium text-white">
        <span className="whitespace-nowrap pl-[14px] tracking-[-0.25px]">#WirVsVirus App / Cumuloc...</span>
      </div>
      <div className="flex w-6 shrink-0 items-center justify-center">
        <svg className="h-3 w-3" viewBox="0 0 12 12" stroke="#a4a5a5"><path d="M6 .5v11M.5 6h11" /></svg>
      </div>
    </div>
  );
}

function AppHeader() {
  return (
    <header className="flex h-[63px] bg-white text-[#063a5c]">
      <div className="flex flex-1 items-start pl-[17px] pt-[15px]">
        <span className="flex h-9 w-8 items-center justify-center rounded bg-[#053a5b] pt-[3px] font-[Roboto] text-[20px] font-medium text-white">Wi</span>
        <span className="ml-[5px] whitespace-nowrap font-[Roboto] text-[26px] font-light leading-[32px] tracking-[-0.82px]">#WirVsVirus App</span>
      </div>
      <div className="flex w-[58px] items-start justify-center border-l border-[#eceef0] pr-[2px] pt-5">
        <div className="grid grid-cols-3 gap-x-[2px] gap-y-[2px]">
          {Array.from({ length: 9 }, (_, i) => <span key={i} className="h-[6px] w-2 rounded-[2px] bg-[#053a5b]" />)}
        </div>
      </div>
      <div className="flex w-[142px] items-start border-l border-[#eceef0] pl-[14px]">
        <span className="w-[70px] whitespace-nowrap pt-[25px] font-[Roboto] text-sm">K. Heinrich</span>
        <svg className="ml-[14px] mt-[17px] h-7 w-7" viewBox="0 0 28 28">
          <circle cx="14" cy="14" r="12.900" fill="#fff" stroke="#053a5b" strokeWidth="2.200" />
          <path d="M14 6.500c3 0 4.500 1.800 4.500 5 0 2-.8 3.600-1.800 4.700-.3 2.200.3 2.600 3.800 3.700C19 22 16.500 23 14 23s-5-1-6.500-3.100c3.500-1.100 4.100-1.500 3.800-3.700-1-1.100-1.800-2.700-1.800-4.700 0-3.200 1.500-5 4.500-5Z" fill="#053a5b" />
        </svg>
      </div>
    </header>
  );
}

export default function App() {
  return (
    <div className="h-[1297px] w-[2061px] overflow-hidden bg-white pl-[55px] pt-[37px] font-[Inter]">
      <div className="flex h-[1187px] w-[1951px] flex-col overflow-hidden rounded-[5px] border border-black bg-[#f1f3f5] shadow-[0_22px_45px_rgba(0,0,0,0.55),0_0px_22px_rgba(0,0,0,0.22)]">
        <Toolbar />
        <TabBar />
        <AppHeader />
        <main className="flex pl-9">
          <section className="mr-6 w-[927px] font-[Roboto] text-[#333]">
            <h1 className="h-[67px] pt-[25px] text-[36px] font-light leading-10">Hessen</h1>
            <div className="h-[78px] bg-white text-sm">
              <div className="flex h-[41px] items-center border-b border-[#e2e4e6] pl-2 font-bold">
                {columns.map((c) => <span key={c.head} className={`${c.w} shrink-0 whitespace-nowrap`}>{c.head}</span>)}
              </div>
              <div className="flex h-[37px] items-center pl-2 pt-px">
                {columns.map((c) => <span key={c.head} className={`${c.w} shrink-0`}>{c.value}</span>)}
              </div>
            </div>
          </section>
          <section className="relative mt-[25px] h-[500px] w-[926px]">
            <MapDrawing />
            <div className="absolute left-[267px] top-[277px] h-[69px] w-60 bg-white/90 pl-1 pt-[7px] font-['Liberation_Sans'] text-[#e0142c]">
              <div className="whitespace-nowrap text-[24px] leading-6 tracking-[-0.75px]">Hessen</div>
              <div className="whitespace-nowrap pt-px text-[14px] leading-4 tracking-[-0.2px]">Auslastung: 70%</div>
              <div className="whitespace-nowrap text-[14px] leading-4 tracking-[-0.2px]">Freie Betten: 3060</div>
            </div>
          </section>
        </main>
      </div>
    </div>
  );
}
